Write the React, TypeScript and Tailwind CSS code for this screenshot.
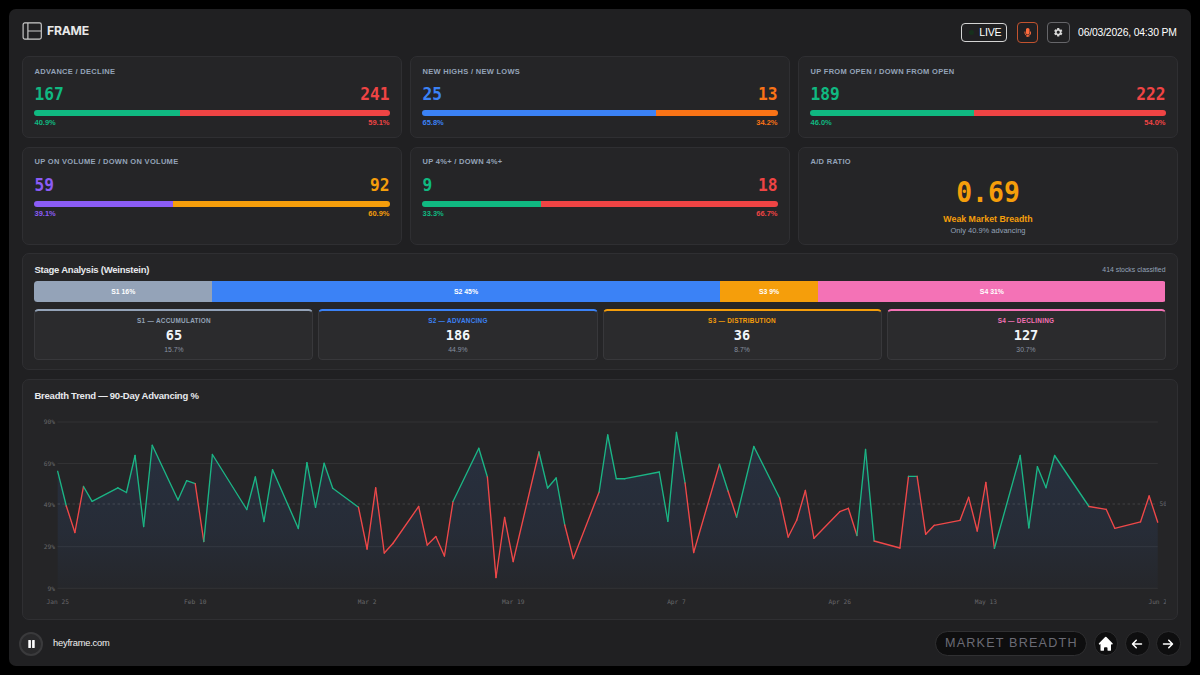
import React from 'react';
import { FaMicrophone } from 'react-icons/fa';
import { FaArrowLeft, FaArrowRight } from 'react-icons/fa6';
import { MdSettings } from 'react-icons/md';
import { HiHome } from 'react-icons/hi';

type Side = { value: number; pct: number; text: string; bg: string };
type Metric = { title: string; left: Side; right: Side };

const side = (value: number, pct: number, text: string, bg: string): Side => ({ value, pct, text, bg });

const GREEN = ['text-[#10b981]', 'bg-[#10b981]'] as const;
const RED = ['text-[#ef4444]', 'bg-[#ef4444]'] as const;

const metrics: Metric[] = [
  { title: 'ADVANCE / DECLINE', left: side(167, 40.9, ...GREEN), right: side(241, 59.1, ...RED) },
  {
    title: 'NEW HIGHS / NEW LOWS',
    left: side(25, 65.8, 'text-[#3b82f6]', 'bg-[#3b82f6]'),
    right: side(13, 34.2, 'text-[#f97316]', 'bg-[#f97316]'),
  },
  { title: 'UP FROM OPEN / DOWN FROM OPEN', left: side(189, 46.0, ...GREEN), right: side(222, 54.0, ...RED) },
  {
    title: 'UP ON VOLUME / DOWN ON VOLUME',
    left: side(59, 39.1, 'text-[#8b5cf6]', 'bg-[#8b5cf6]'),
    right: side(92, 60.9, 'text-[#f59e0b]', 'bg-[#f59e0b]'),
  },
  { title: 'UP 4%+ / DOWN 4%+', left: side(9, 33.3, ...GREEN), right: side(18, 66.7, ...RED) },
];

const stages = [
  { id: 'S1', name: 'ACCUMULATION', count: 65, pct: 15.7, text: 'text-[#94a3b8]', bg: 'bg-[#94a3b8]', border: 'border-t-[#94a3b8]' },
  { id: 'S2', name: 'ADVANCING', count: 186, pct: 44.9, text: 'text-[#3b82f6]', bg: 'bg-[#3b82f6]', border: 'border-t-[#3b82f6]' },
  { id: 'S3', name: 'DISTRIBUTION', count: 36, pct: 8.7, text: 'text-[#f59e0b]', bg: 'bg-[#f59e0b]', border: 'border-t-[#f59e0b]' },
  { id: 'S4', name: 'DECLINING', count: 127, pct: 30.7, text: 'text-[#f472b6]', bg: 'bg-[#f472b6]', border: 'border-t-[#f472b6]' },
];

// [day offset, y position, colour of the segment that ends here]
type Point = [number, number, 'g' | 'r'];
const points: Point[] = [
  [0, 471.3, 'g'], [1, 506, 'g'], [2, 532.5, 'r'], [3, 486.5, 'r'], [4, 501.3, 'g'], [7, 487.8, 'g'], [8, 492.5, 'g'],
  [9, 455.5, 'g'], [10, 526.5, 'g'], [11, 445.3, 'g'], [14, 500, 'g'], [15, 480.7, 'g'], [16, 483.7, 'g'],
  [17, 541.5, 'r'], [18, 454.5, 'g'], [22, 509.5, 'g'], [23, 477, 'g'], [24, 521.5, 'g'], [25, 469.7, 'g'],
  [28, 528.5, 'g'], [29, 462.7, 'g'], [30, 507.3, 'g'], [31, 463.3, 'g'], [32, 488.3, 'g'], [35, 507.3, 'g'],
  [36, 549, 'r'], [37, 487.8, 'r'], [38, 553, 'r'], [39, 543.5, 'r'], [42, 506.5, 'r'], [43, 545, 'r'],
  [44, 536.5, 'r'], [45, 556, 'r'], [46, 501.5, 'r'], [49, 448.3, 'g'], [50, 477, 'g'], [51, 577.5, 'r'],
  [52, 517.5, 'r'], [53, 561.5, 'r'], [56, 452, 'r'], [57, 488, 'g'], [58, 478, 'g'], [59, 525, 'g'],
  [60, 558.5, 'r'], [63, 492, 'r'], [64, 435, 'g'], [65, 478.7, 'g'], [66, 478.7, 'g'], [70, 472, 'g'],
  [71, 521.3, 'g'], [72, 432.5, 'g'], [73, 483, 'g'], [74, 552.5, 'r'], [77, 464.3, 'r'], [78, 491, 'g'],
  [79, 517.2, 'r'], [81, 446.5, 'g'], [84, 498, 'g'], [85, 537, 'r'], [86, 520, 'r'], [87, 490.5, 'r'],
  [88, 538.3, 'r'], [91, 511.7, 'r'], [92, 508.3, 'r'], [93, 535.5, 'r'], [94, 449.5, 'g'], [95, 541, 'g'],
  [98, 548, 'r'], [99, 476.3, 'r'], [100, 476.3, 'g'], [101, 534.3, 'r'], [102, 525.3, 'r'], [105, 520.3, 'r'],
  [106, 497.3, 'r'], [107, 531, 'r'], [108, 482.5, 'r'], [109, 548.3, 'r'], [112, 455.5, 'g'], [113, 527.8, 'g'],
  [114, 466.7, 'g'], [115, 487.7, 'g'], [116, 455.5, 'g'], [120, 506.5, 'g'], [122, 509.3, 'r'], [123, 528.3, 'r'],
  [126, 521.8, 'r'], [127, 496, 'r'], [128, 522.2, 'r'],
];
const dayX = (d: number) => 58.2 + d * 8.594;
const yTicks: [string, number][] = [['90%', 422], ['69%', 463.5], ['49%', 505], ['29%', 546.7], ['9%', 588.3]];
const xTicks: [string, number][] = [
  ['Jan 25', 0], ['Feb 10', 16], ['Mar 2', 36], ['Mar 19', 53], ['Apr 7', 72], ['Apr 26', 91], ['May 13', 108], ['Jun 2', 128],
];

const CARD = 'shrink-0 rounded-[7px] border border-[#2f2f32] bg-[#252527]';
const MONO = "font-['DejaVu_Sans_Mono','Liberation_Mono',monospace]";
const LABEL = 'text-[7.5px] leading-[11px] font-bold tracking-[0.3px] text-[#94a3b8]';
const ROUND = 'flex size-[24.5px] items-center justify-center rounded-full border border-[#2c2c2e] bg-[#0e0e0f]';

function MetricCard({ m }: { m: Metric }) {
  return (
    <div className={`${CARD} px-[11.2px] pt-[8.8px]`}>
      <div className={LABEL}>{m.title}</div>
      <div className={`mt-[7.6px] flex scale-y-[1.1] justify-between text-[16.2px] leading-[20px] font-bold ${MONO}`}>
        <span className={m.left.text}>{m.left.value}</span>
        <span className={m.right.text}>{m.right.value}</span>
      </div>
      <div className="mt-[5.6px] flex h-[6px] overflow-hidden rounded-full">
        <div className={m.left.bg} style={{ width: `${m.left.pct}%` }} />
        <div className={`flex-1 ${m.right.bg}`} />
      </div>
      <div className="mt-[2.5px] flex justify-between text-[7.5px] leading-[9px] font-bold">
        <span className={m.left.text}>{m.left.pct.toFixed(1)}%</span>
        <span className={m.right.text}>{m.right.pct.toFixed(1)}%</span>
      </div>
    </div>
  );
}

function BreadthChart() {
  const area = `M${dayX(0)} 588.3 ` + points.map(([d, y]) => `L${dayX(d)} ${y}`).join(' ') + ` L${dayX(128)} 588.3 Z`;
  return (
    <svg className="block h-[200px] w-[1131.5px] overflow-hidden" viewBox="34.5 410 1131.5 200">
      <defs>
        <linearGradient id="area" gradientUnits="userSpaceOnUse" x1="0" x2="0" y1="432" y2="588">
          <stop offset="0" stopColor="#3b82f6" stopOpacity="0.12" />
          <stop offset="0.65" stopColor="#3b82f6" stopOpacity="0.075" />
          <stop offset="1" stopColor="#3b82f6" stopOpacity="0.02" />
        </linearGradient>
      </defs>
      {yTicks.map(([label, y]) => (
        <g key={label}>
          {label !== '49%' && <line x1="58" x2="1158.3" y1={y} y2={y} stroke="#ffffff" strokeOpacity="0.07" strokeWidth="0.9" />}
          <text x="55.5" y={y + 2.3} textAnchor="end" className={`fill-[#68686b] text-[6.2px] ${MONO}`}>{label}</text>
        </g>
      ))}
      <path d={area} fill="url(#area)" />
      <line x1="58" x2="1158.3" y1="504" y2="504" stroke="#ffffff" strokeOpacity="0.2" strokeWidth="0.7" strokeDasharray="2.5 2.5" />
      <text x="1160" y="506.2" className={`fill-[#68686b] text-[6.2px] ${MONO}`}>50%</text>
      {points.slice(1).map(([d, y, c], i) => (
        <line
          key={d}
          x1={dayX(points[i][0])}
          y1={points[i][1]}
          x2={dayX(d)}
          y2={y}
          stroke={c === 'g' ? '#1bb585' : '#ef4849'}
          strokeWidth="1.35"
          strokeLinecap="round"
        />
      ))}
      {xTicks.map(([label, d]) => (
        <text key={label} x={dayX(d)} y="603.7" textAnchor="middle" className={`fill-[#68686b] text-[6.2px] ${MONO}`}>{label}</text>
      ))}
    </svg>
  );
}

export default function App() {
  return (
    <div className="h-[675px] w-[1200px] overflow-hidden bg-black p-[9px] font-['Liberation_Sans',Arial,sans-serif]">
      <div className="flex h-[657px] w-[1182px] flex-col rounded-[7px] bg-[#202022] px-[13.3px]">
        <header className="flex h-[47px] shrink-0 items-center justify-between">
          <div className="flex items-center gap-[4.8px] pb-[2.2px]">
            <svg className="h-[18px] w-[20px]" viewBox="0 0 20 18" fill="none" stroke="#cccccc" strokeWidth="1.15">
              <rect x="1.1" y="0.9" width="18.2" height="16.2" rx="1.8" />
              <path d="M5.9 1v16M5.9 9H19" />
            </svg>
            <span className="font-['Inter',sans-serif] text-[12.2px] leading-[16px] font-bold tracking-[-0.25px] text-[#e8e8e8]">FRAME</span>
          </div>
          <div className="flex items-center pr-[1px] text-white">
            <div className="flex h-[19px] w-[46.5px] items-center rounded-[4px] border border-[#d4d4d4] pl-[7px] text-[10.6px] leading-[17px] tracking-[-0.2px]">
              <span className="mr-[5.5px] size-[5px] rounded-full bg-[#17301d]" />
              <span>LIVE</span>
            </div>
            <div className="ml-[9.5px] flex h-[20.5px] w-[21px] items-center justify-center rounded-[4px] border border-[#c2532f] text-[#ff6b3d]">
              <FaMicrophone className="size-[9.5px]" />
            </div>
            <div className="ml-[9.3px] flex h-[20.5px] w-[22.5px] items-center justify-center rounded-[4px] border border-[#66666a] text-[#d8d8d8]">
              <MdSettings className="size-[10.5px]" />
            </div>
            <span className="ml-[8.5px] text-[10.4px] tracking-[-0.18px]">06/03/2026, 04:30 PM</span>
          </div>
        </header>

        <div className="grid shrink-0 grid-cols-3 grid-rows-[82px_98.5px] gap-x-[8.6px] gap-y-[8.6px]">
          {metrics.map((m) => <MetricCard key={m.title} m={m} />)}
          <div className={`${CARD} px-[11.2px] pt-[8.8px]`}>
            <div className={LABEL}>A/D RATIO</div>
            <div className="flex flex-col items-center">
              <div className={`mt-[9px] scale-y-[1.06] text-[26.4px] leading-[32px] font-bold text-[#f59e0b] ${MONO}`}>0.69</div>
              <div className="mt-[5.4px] text-[8.8px] leading-[11px] font-bold text-[#f59e0b]">Weak Market Breadth</div>
              <div className="text-[7.5px] leading-[11px] text-[#94a3b8]">Only 40.9% advancing</div>
            </div>
          </div>
        </div>

        <section className={`${CARD} mt-[8.4px] h-[117px] px-[11.2px] pt-[8.5px]`}>
          <div className="flex h-[14px] items-center justify-between">
            <h2 className="text-[9.5px] font-bold tracking-[-0.24px] text-[#e8eaed]">Stage Analysis (Weinstein)</h2>
            <span className="text-[6.9px] text-[#94a3b8]">414 stocks classified</span>
          </div>
          <div className="mt-[4px] flex h-[21.5px] overflow-hidden rounded-[3.5px] text-[6.9px] font-bold text-white">
            {stages.map((s) => (
              <div key={s.id} className={`flex items-center justify-center ${s.bg}`} style={{ width: `${s.pct}%` }}>
                {s.id} {Math.round(s.pct)}%
              </div>
            ))}
          </div>
          <div className="mt-[6.3px] grid grid-cols-4 gap-[5px]">
            {stages.map((s) => (
              <div key={s.id} className={`flex h-[51.5px] flex-col items-center rounded-[4.5px] border border-t-2 border-[#38383b] bg-[#2b2b2d] pt-[5px] ${s.border}`}>
                <div className={`text-[6.4px] leading-[9px] font-bold tracking-[0.27px] ${s.text}`}>{s.id} — {s.name}</div>
                <div className={`mt-[2px] scale-y-[1.06] text-[13.6px] leading-[17px] font-bold text-[#f1f5f9] ${MONO}`}>{s.count}</div>
                <div className="mt-[1px] text-[6.8px] leading-[9px] text-[#8791a1]">{s.pct}%</div>
              </div>
            ))}
          </div>
        </section>

        <section className={`${CARD} mt-[8.6px] h-[241px] px-[11.2px] pt-[9px]`}>
          <h2 className="h-[14px] text-[9.5px] leading-[14px] font-bold tracking-[-0.24px] text-[#e8eaed]">Breadth Trend — 90-Day Advancing %</h2>
          <div className="pt-[7px]"><BreadthChart /></div>
        </section>

        <footer className="-mx-[3.3px] flex h-[45.5px] shrink-0 items-center justify-between pt-[1.5px]">
          <div className="flex items-center gap-[10px]">
            <div className="flex size-[24px] items-center justify-center rounded-full border-2 border-[#3a3a3c] bg-[#29292b]">
              <svg className="h-[8px] w-[7px]" viewBox="0 0 7 8" fill="#ffffff">
                <rect x="0.3" y="0" width="2.6" height="8" rx="0.6" />
                <rect x="4.1" y="0" width="2.6" height="8" rx="0.6" />
              </svg>
            </div>
            <span className="pt-[1.5px] text-[9.3px] tracking-[-0.2px] text-[#f2f2f2]">heyframe.com</span>
          </div>
          <div className="flex items-center gap-[6.6px] pr-[0.4px] text-white">
            <div className="mr-[0.6px] flex h-[25.5px] w-[152px] items-center justify-center rounded-full border border-[#303032] bg-[#0e0e0f] pl-[1.2px] text-[12.6px] tracking-[1.2px] text-[#6b6b75]">
              MARKET BREADTH
            </div>
            <div className={ROUND}><HiHome className="size-[17.5px]" /></div>
            <div className={ROUND}><FaArrowLeft className="size-[12px]" /></div>
            <div className={ROUND}><FaArrowRight className="size-[12px]" /></div>
          </div>
        </footer>
      </div>
    </div>
  );
}
